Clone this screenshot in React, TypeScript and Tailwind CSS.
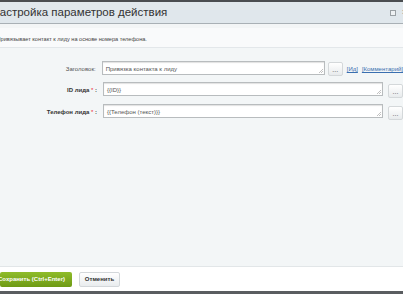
import React from "react";

const F = { fontFamily: '"Liberation Sans", Arial, sans-serif' };

function Dots({ className = "" }: { className?: string }) {
  return (
    <button className={`w-[15px] h-[14px] rounded-[2px] border border-[#d4d8da] bg-gradient-to-b from-white to-[#e8ebed] text-[7px] leading-none text-[#555] flex items-center justify-center shrink-0 ${className}`}>
      ...
    </button>
  );
}

function Field({ value, width }: { value: string; width: string }) {
  return (
    <div className={`relative h-[14px] ${width} bg-white border border-[#b8bcbe] shadow-[inset_0_1px_1px_rgba(0,0,0,0.12)] shrink-0`}>
      <span className="absolute left-[3px] top-[3px] text-[6px] leading-[8px] text-[#555] whitespace-nowrap">{value}</span>
      <svg className="absolute right-[1px] bottom-[1px]" width="5" height="5" viewBox="0 0 5 5">
        <path d="M1 5 L5 1 M3 5 L5 3" stroke="#999" strokeWidth="0.6" />
      </svg>
    </div>
  );
}

export default function App() {
  return (
    <div className="w-[403px] h-[294px] flex flex-col bg-[#f3f6f7] overflow-hidden" style={F}>
      <div className="h-[2px] bg-[#4a4d50] shrink-0" />
      <div className="h-[22px] bg-[#e0e7ec] border-b-[1px] border-[#a9b0b5] flex items-center justify-between shrink-0">
        <span className="text-[11.5px] text-[#333] -ml-[8.5px] whitespace-nowrap">Настройка параметров действия</span>
        <div className="flex items-center gap-[6px] mr-[-4px]">
          <span className="w-[6px] h-[6px] border border-[#9aa0a4] bg-[#eef1f3]" />
          <span className="text-[9px] text-[#888] leading-none">×</span>
        </div>
      </div>
      <div className="h-[4px] bg-[#f3f5f6] shrink-0" />
      <div className="h-[20px] bg-[#f9fafb] border-b border-[#e3e7ea] flex items-center pt-[4px] shrink-0">
        <span className="text-[5.6px] text-[#444] -ml-[3.5px] whitespace-nowrap">Привязывает контакт к лиду на основе номера телефона.</span>
      </div>
      <div className="flex-1 flex flex-col gap-[6px] pt-[13px]">
        <div className="flex items-start">
          <div className="w-[103px] text-right text-[6px] text-[#555] pt-[4px] pr-[6px] whitespace-nowrap">Заголовок:</div>
          <Field value="Привязка контакта к лиду" width="w-[223px]" />
          <Dots className="ml-[3px] mt-[1px]" />
          <span className="ml-[4px] mt-[4px] text-[6px] text-[#3a6fb0] underline whitespace-nowrap">[Ид]</span>
          <span className="ml-[4px] mt-[4px] text-[6px] text-[#3a6fb0] underline whitespace-nowrap">[Комментарий]</span>
        </div>
        <div className="flex items-start">
          <div className="w-[103px] text-right text-[6px] font-bold text-[#333] pt-[4px] pr-[6px] whitespace-nowrap">ID лида <span className="text-[#e23] font-normal">*</span> :</div>
          <Field value="{{ID}}" width="w-[280px]" />
          <Dots className="ml-[5px] mt-[2px]" />
        </div>
        <div className="flex items-start">
          <div className="w-[103px] text-right text-[6px] font-bold text-[#333] pt-[4px] pr-[6px] whitespace-nowrap">Телефон лида <span className="text-[#e23] font-normal">*</span> :</div>
          <Field value="{{Телефон (текст)}}" width="w-[280px]" />
          <Dots className="ml-[5px] mt-[2px]" />
        </div>
      </div>
      <div className="h-[25px] bg-white border-t border-[#e2e6e8] flex items-center gap-[7px] shrink-0">
        <button className="h-[15px] w-[72px] rounded-[2px] bg-gradient-to-b from-[#8fbc2a] to-[#6e9a14] text-white text-[6px] font-bold flex items-center justify-end pr-[7px] whitespace-nowrap overflow-hidden">
          Сохранить (Ctrl+Enter)
        </button>
        <button className="h-[15px] w-[41px] rounded-[2px] border border-[#d3d7da] bg-gradient-to-b from-white to-[#e9ecee] text-[#333] text-[6px] font-bold flex items-center justify-center">
          Отменить
        </button>
      </div>
      <div className="h-[3px] bg-[#5a5d60] shrink-0" />
    </div>
  );
}
